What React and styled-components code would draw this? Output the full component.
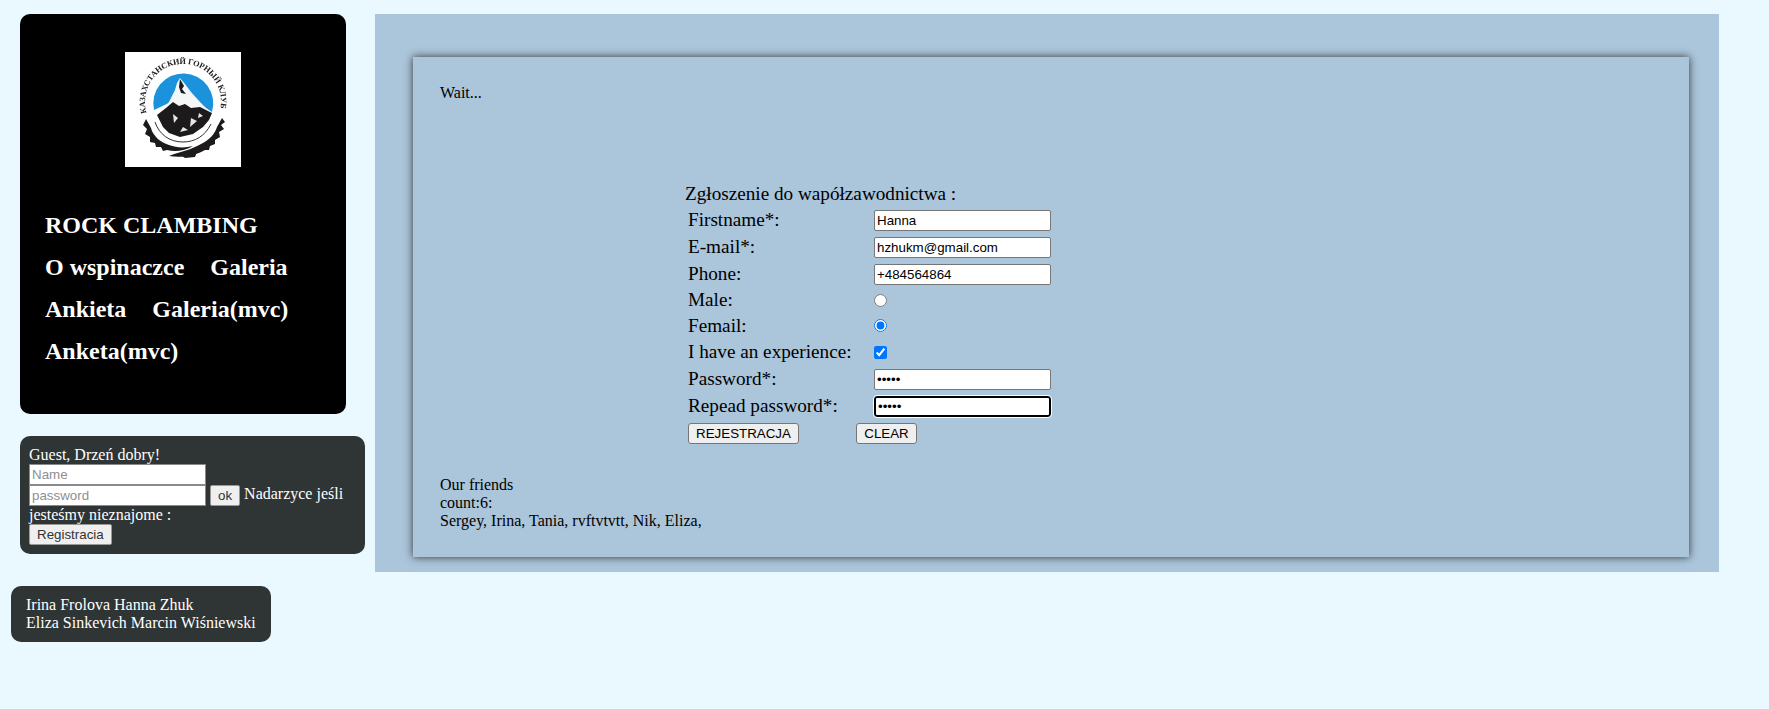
import React from 'react'
import styled, { createGlobalStyle } from 'styled-components'

const Global = createGlobalStyle`
  html, body {
    margin: 0;
    background: #e9f9ff;
    font-family: "Liberation Serif", "Times New Roman", serif;
    color: #000;
  }
`

const Page = styled.div`
  display: flex;
  align-items: flex-start;
  padding-top: 14px;
  box-sizing: border-box;
  min-height: 709px;
`

const Sidebar = styled.aside`
  width: 364px;
  padding-left: 11px;
  flex-shrink: 0;
  display: flex;
  flex-direction: column;
  align-items: flex-start;
`

const MenuCard = styled.nav`
  width: 326px;
  height: 400px;
  margin-left: 9px;
  background: #000;
  border-radius: 10px;
  box-sizing: border-box;
  padding: 38px 25px 0;
`

const LogoBox = styled.div`
  width: 116px;
  height: 115px;
  margin: 0 auto 37px 80px;
  background: #fff;
`

const MenuLine = styled.div`
  display: flex;
  gap: 26px;
  height: 42px;
  line-height: 42px;
  font-size: 24px;
  font-weight: 700;
  color: #fff;
  white-space: nowrap;
`

const LoginCard = styled.div`
  width: 345px;
  height: 118px;
  margin: 22px 0 0 9px;
  padding: 10px 9px;
  box-sizing: border-box;
  background: #2f3435;
  border-radius: 10px;
  color: #fff;
  font-size: 16px;
  line-height: 18px;
`

const LoginInput = styled.input`
  width: 177px;
  height: 21px;
  box-sizing: border-box;
  padding: 1px 2px;
  font-family: "Liberation Sans", Arial, sans-serif;
  font-size: 13.33px;
  border: 1px solid #8a8a8a;
  border-radius: 0;
  background: #fff;
  display: inline-block;
  vertical-align: middle;
  &::placeholder { color: #8f8f8f; }
`

const SmallButton = styled.button`
  height: 21px;
  padding: 1px 7px;
  margin: 0;
  box-sizing: border-box;
  font-family: "Liberation Sans", Arial, sans-serif;
  font-size: 13.33px;
  color: #333;
  background: #efefef;
  border: 1px solid #999;
  border-radius: 2px;
  vertical-align: middle;
`

const TeamCard = styled.div`
  width: 260px;
  height: 56px;
  margin-top: 32px;
  padding: 10px 15px;
  box-sizing: border-box;
  background: #2f3435;
  border-radius: 10px;
  color: #fff;
  font-size: 16px;
  line-height: 18px;
  white-space: nowrap;
`

const Main = styled.main`
  width: 1344px;
  height: 558px;
  box-sizing: border-box;
  padding: 43px 30px 15px 38px;
  background: #abc5db;
`

const Panel = styled.section`
  height: 500px;
  box-sizing: border-box;
  padding: 27px 27px 0;
  background: #abc5db;
  box-shadow: 0 0 8px #333;
  font-size: 16px;
  line-height: 18px;
`

const Wait = styled.div`
  height: 99px;
`

const FormBlock = styled.form`
  margin-left: 245px;
  height: 277px;
  font-size: 19.2px;
`

const FormTitle = styled.div`
  line-height: 22px;
  height: 22px;
  margin-bottom: 2px;
`

const FormGrid = styled.div`
  margin-left: 3px;
  display: grid;
  grid-template-columns: 186px 177px;
  grid-template-rows: 27px 27px 27px 25px 25px 28px 27px 27px;
  align-items: center;
`

const Label = styled.label`
  line-height: 22px;
  white-space: nowrap;
  margin-bottom: ${p => (p.$level ? 0 : 2)}px;
`

const Field = styled.input`
  width: 177px;
  height: 21px;
  box-sizing: border-box;
  margin: 0;
  padding: 1px 2px;
  font-family: "Liberation Sans", Arial, sans-serif;
  font-size: 13.33px;
  color: #000;
  background: #fff;
  border: ${p => (p.$focused ? '2px solid #000' : '1px solid #767676')};
  border-radius: ${p => (p.$focused ? '3px' : '2px')};
  outline: ${p => (p.$focused ? '1px solid #fff' : 'none')};
`

const Choice = styled.input`
  margin: 0;
  width: 13px;
  height: 13px;
  accent-color: #0075ff;
`

const Buttons = styled.div`
  display: flex;
  margin: 3px 0 0 3px;
`

const FormButton = styled.button`
  height: 21px;
  padding: 1px 6px;
  width: ${p => p.$width}px;
  margin-right: ${p => p.$after || 0}px;
  box-sizing: border-box;
  font-family: "Liberation Sans", Arial, sans-serif;
  font-size: 13.33px;
  color: #000;
  background: #efefef;
  border: 1px solid #767676;
  border-radius: 3px;
`

const Friends = styled.div`
  margin-top: 16px;
`

function Logo() {
  return (
    <svg width="116" height="115" viewBox="0 0 116 115" style={{ display: 'block' }}>
      <defs>
        <path id="ring" d="M 21.7 61 A 38 38 0 1 1 95.7 54.9" fill="none" />
      </defs>
      <g style={{ filter: 'blur(0.35px)' }}>
        {/* sky disc, open at the foot of the mountain */}
        <path d="M 29 58 A 30 30 0 1 1 87 60 L 72 50 L 46 50 Z" fill="#1b92dc" />
        {/* snow cap */}
        <path d="M 55 26 L 60 32 L 66 40 L 75 50 L 86 61 L 62 56 L 46 56 L 33 62 L 44 50 L 50 38 L 52 31 Z" fill="#f5f7f7" />
        <path d="M 55 27 L 59 34 L 57 37 L 61 42 L 56 41 L 54 35 Z" fill="#1c1a1a" />
        {/* rock */}
        <path d="M 32 63 L 41 56 L 48 50 L 54 54 L 60 52 L 66 56 L 75 55 L 87 61 L 84 68 L 78 75 L 68 82 L 55 85 L 44 81 L 38 75 Z" fill="#1c1a1a" />
        <path d="M 48 62 L 53 66 L 49 71 Z M 66 66 L 72 69 L 65 75 Z M 58 75 L 63 78 L 55 80 Z M 74 61 L 78 64 L 73 66 Z" fill="#e4e7e7" />
        {/* wings */}
        <path d="M 21 67 L 26 76 C 28 84 35 90 44 93 C 52 96 60 96 68 94 C 60 99 50 100 42 98 L 38 99 L 36 95 L 31 95 L 30 91 L 25 90 L 25 85 L 20 82 L 22 77 L 18 73 Z" fill="#1c1a1a" />
        <path d="M 97 66 L 92 75 C 90 82 84 88 76 92 C 66 98 54 100 44 104 C 56 106 70 104 80 98 L 84 98 L 85 94 L 90 92 L 90 88 L 95 85 L 94 80 L 99 77 L 96 73 L 100 70 Z" fill="#1c1a1a" />
        <path d="M 30 70 C 34 82 44 90 58 90 C 70 90 80 84 86 72" fill="none" stroke="#1c1a1a" strokeWidth="0.9" />
        <path d="M 54 102 L 72 100 L 70 105 L 60 106 Z" fill="#1c1a1a" />
        <text fontFamily="Liberation Serif, serif" fontSize="8.2" fontWeight="700" fill="#222">
          <textPath href="#ring" textLength="137" lengthAdjust="spacing">КАЗАХСТАНСКИЙ ГОРНЫЙ КЛУБ</textPath>
        </text>
      </g>
    </svg>
  )
}

const rows = [
  ['Firstname*:', 'text', 'Hanna'],
  ['E-mail*:', 'text', 'hzhukm@gmail.com'],
  ['Phone:', 'text', '+484564864'],
]

export default function App() {
  return (
    <Page>
      <Global />
      <Sidebar>
        <MenuCard>
          <LogoBox><Logo /></LogoBox>
          <MenuLine>ROCK CLAMBING</MenuLine>
          <MenuLine><span>O wspinaczce</span><span>Galeria</span></MenuLine>
          <MenuLine><span>Ankieta</span><span>Galeria(mvc)</span></MenuLine>
          <MenuLine>Anketa(mvc)</MenuLine>
        </MenuCard>
        <LoginCard>
          Guest, Drzeń dobry!<br />
          <LoginInput placeholder="Name" readOnly /><br />
          <LoginInput placeholder="password" readOnly />{' '}
          <SmallButton type="button">ok</SmallButton>{' '}
          Nadarzyce jeśli jesteśmy nieznajome :<br />
          <SmallButton type="button">Registracia</SmallButton>
        </LoginCard>
        <TeamCard>
          Irina Frolova Hanna Zhuk<br />
          Eliza Sinkevich Marcin Wiśniewski
        </TeamCard>
      </Sidebar>
      <Main>
        <Panel>
          <Wait>Wait...</Wait>
          <FormBlock>
            <FormTitle>Zgłoszenie do wapółzawodnictwa :</FormTitle>
            <FormGrid>
              {rows.map(([label, type, value]) => (
                <React.Fragment key={label}>
                  <Label>{label}</Label>
                  <Field type={type} defaultValue={value} />
                </React.Fragment>
              ))}
              <Label>Male:</Label>
              <Choice type="radio" name="sex" />
              <Label $level>Femail:</Label>
              <Choice type="radio" name="sex" defaultChecked />
              <Label $level>I have an experience:</Label>
              <Choice type="checkbox" defaultChecked />
              <Label>Password*:</Label>
              <Field type="password" defaultValue="12345" />
              <Label>Repead password*:</Label>
              <Field type="password" defaultValue="12345" $focused />
            </FormGrid>
            <Buttons>
              <FormButton type="button" $width={111} $after={57}>REJESTRACJA</FormButton>
              <FormButton type="button" $width={61}>CLEAR</FormButton>
            </Buttons>
          </FormBlock>
          <Friends>
            Our friends<br />
            count:6:<br />
            Sergey, Irina, Tania, rvftvtvtt, Nik, Eliza,
          </Friends>
        </Panel>
      </Main>
    </Page>
  )
}
